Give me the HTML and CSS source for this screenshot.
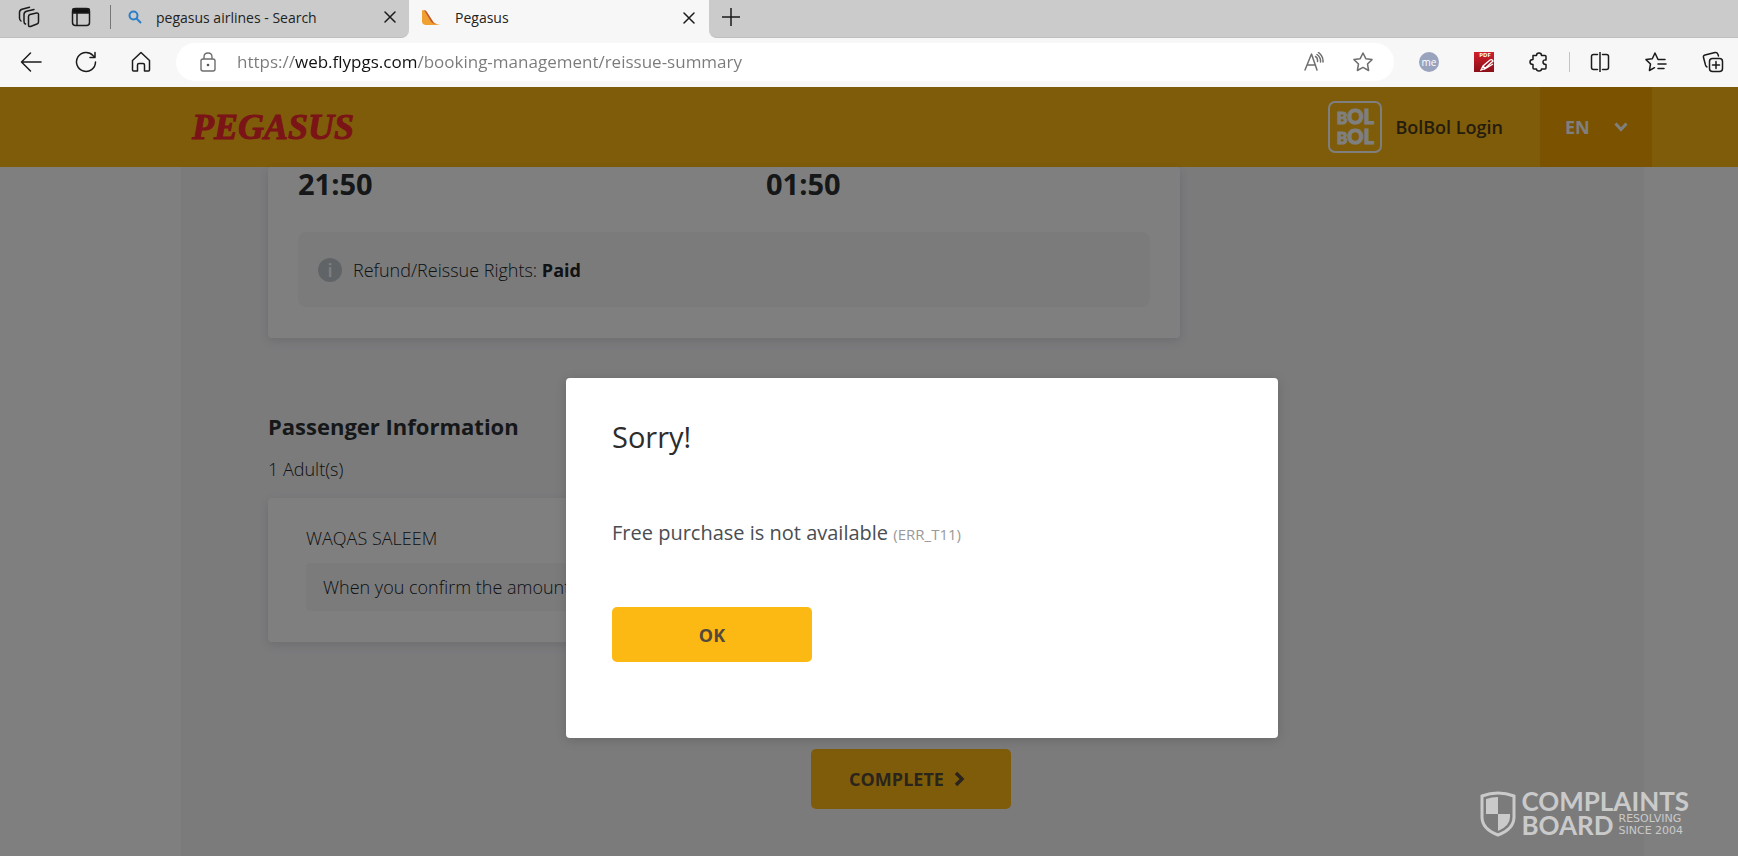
FILE: index.html
```html
<!DOCTYPE html>
<html lang="en">
<head>
  <meta charset="UTF-8" />
  <meta name="viewport" content="width=device-width, initial-scale=1.0"/>
  <title>Pegasus</title>
  <link rel="stylesheet" href="styles.css">
</head>
<body>
  <div class="tab-strip">
    <div class="strip-left">
      <button class="icon-btn workspaces" aria-label="Workspaces">
        <svg width="22" height="22" viewBox="0 0 22 22"><path d="M12 8.500 18.500 7q2-.3 2 1.500v7.500q0 1.500-1.500 2L12.500 20.500Q10.500 21 10.500 19v-8.500q0-1.500 1.500-2zM7.500 18Q6 17.500 6 15.500V8.500Q6 6 8.500 5.300L16 3.500M3 15Q1.500 14 1.500 12V6.500Q1.500 4 4 3.200L11.500 1.200"/></svg>
      </button>
      <button class="icon-btn tab-menu" aria-label="Tab actions">
        <svg width="20" height="20" viewBox="0 0 20 20"><rect x="1.500" y="1.500" width="17" height="17" rx="3"/><path d="M6 6v12"/><path class="solid" d="M2 2h16v4H2z"/></svg>
      </button>
      <div class="strip-line"></div>
      <div class="tab">
        <svg class="search-icon" width="14" height="14" viewBox="0 0 14 14"><circle cx="5.500" cy="5.500" r="4"/><path d="M8.500 8.500 13 13"/></svg>
        <span class="tab-title">pegasus airlines - Search</span>
        <button class="icon-btn" aria-label="Close tab">
          <svg width="12" height="12" viewBox="0 0 12 12"><path d="M1 1l10 10M11 1 1 11"/></svg>
        </button>
      </div>
    </div>
    <div class="tab tab-active">
      <svg class="favicon" width="20" height="16" viewBox="0 0 20 16"><path fill="#f0a030" d="M1 0Q4 0 5 2l6 8q2 4 8 5H4Q1 14 1 12z"/><path fill="#c0582c" d="M3 0q2 0 3 2l5 8q1 3 4 4-4 0-6-4z"/></svg>
      <span class="tab-title">Pegasus</span>
      <button class="icon-btn" aria-label="Close tab">
        <svg width="12" height="12" viewBox="0 0 12 12"><path d="M1 1l10 10M11 1 1 11"/></svg>
      </button>
    </div>
    <div class="strip-right">
      <button class="icon-btn" aria-label="New tab">
        <svg width="18" height="18" viewBox="0 0 18 18"><path d="M9 0v18M0 9h18"/></svg>
      </button>
    </div>
  </div>

  <div class="toolbar">
    <div class="nav-buttons">
      <button class="icon-btn" aria-label="Back">
        <svg width="22" height="22" viewBox="0 0 22 22"><path d="M21 11H2M10.500 2 1.500 11l9 9"/></svg>
      </button>
      <button class="icon-btn" aria-label="Refresh">
        <svg width="22" height="22" viewBox="0 0 22 22"><path d="M20.500 11A9.500 9.500 0 1 1 18 4.500L20 6.500M20 1.500v5h-5"/></svg>
      </button>
      <button class="icon-btn" aria-label="Home">
        <svg width="22" height="22" viewBox="0 0 22 22"><path d="M2.500 9.500 11 1.500l8.500 8V19q0 1-1 1H14.500v-6q0-1.500-1.500-1.500H9q-1.500 0-1.500 1.500v6H3.500q-1 0-1-1z"/></svg>
      </button>
    </div>
    <div class="address-bar">
      <svg class="lock" width="18" height="20" viewBox="0 0 18 20"><rect x="2" y="7" width="14" height="12" rx="2"/><path d="M5 7V5q0-4 4-4t4 4v2"/><circle class="dot" cx="9" cy="13" r="1.300"/></svg>
      <input class="url" type="text" aria-label="Address" value="https://web.flypgs.com/booking-management/reissue-summary">
      <button class="icon-btn grey" aria-label="Read aloud">
        <svg width="20" height="20" viewBox="0 0 20 20"><path d="M1 18 7.500 2 13 18M3 13h8.500M11.500 4.500Q14 6 13.500 9.500M13 2.500q4 3 3.500 7.500M14.500.5q5 4 4.500 9.500"/></svg>
      </button>
      <button class="icon-btn grey" aria-label="Add to favorites">
        <svg width="20" height="20" viewBox="0 0 20 20"><path d="m10 1 2.800 5.700 6.200.9-4.500 4.400 1.100 6.500L10 15.400 4.400 18.500l1.100-6.500L1 7.600l6.200-.9z"/></svg>
      </button>
    </div>
    <div class="extensions">
      <button class="ext-me" aria-label="me extension">me</button>
      <button class="ext-pdf" aria-label="PDF extension">
        <span>PDF</span>
        <svg width="14" height="12" viewBox="0 0 14 12"><path d="M1 11 3 7l7-6q2-1 3 1L5 9.500zM4 10.500 13 5M3 7l2 2.500"/></svg>
      </button>
      <button class="icon-btn" aria-label="Extensions">
        <svg width="20" height="20" viewBox="0 0 20 20"><path d="M4 3.500h3.500q0-2.500 2.500-2.500t2.500 2.500H16q1 0 1 1V8q-3-.5-3 2t3 2.500v3.500q0 1-1 1h-3.500q0 2-2.500 2t-2.500-2H5q-1 0-1-1V12.500Q1 12.500 1 10t3-2.500z"/></svg>
      </button>
      <div class="bar-line"></div>
      <button class="icon-btn" aria-label="Split screen">
        <svg width="20" height="20" viewBox="0 0 20 20"><path d="M7.500 2.500h-4q-2 0-2 2v11q0 2 2 2h4M12.500 2.500h4q2 0 2 2v11q0 2-2 2h-4M10 0v20"/></svg>
      </button>
      <button class="icon-btn" aria-label="Favorites">
        <svg width="22" height="20" viewBox="0 0 22 20"><path d="M20 7.500h-7L10 1 7.300 6.700 1 7.600 5.500 12 4.400 18.500 9.500 15.700M13 12h8M13 16.500h6"/></svg>
      </button>
      <button class="icon-btn" aria-label="Collections">
        <svg width="22" height="22" viewBox="0 0 22 22"><rect x="7.500" y="7.500" width="13" height="13" rx="3"/><path d="M14 10.500v7M10.500 14h7M16.500 5 15.800 3Q15 1 13 1.500L3 4Q1 4.500 1.500 6.500L3.500 14q.5 1.500 1.500 2"/></svg>
      </button>
    </div>
  </div>

  <div class="page">
    <header class="site-header">
      <a class="logo" href="#">PEGASUS</a>
      <div class="header-right">
        <a class="bolbol" href="#">
          <span class="bolbol-logo">
            <span class="bolbol-line"><small>B</small>OL</span>
            <span class="bolbol-line"><small>B</small>OL</span>
          </span>
          BolBol Login
        </a>
        <div class="lang">
          <select aria-label="Language">
            <option>EN</option>
          </select>
          <svg class="chevron" width="14" height="10" viewBox="0 0 14 10"><path d="M1.500 1.500 7 7.500l5.500-6"/></svg>
        </div>
      </div>
    </header>

    <main class="content">
      <section class="card flight-card">
        <div class="times">
          <span>21:50</span>
          <span>01:50</span>
        </div>
        <div class="rights">
          <span class="info-icon">i</span>
          <p>Refund/Reissue Rights: <b>Paid</b></p>
        </div>
      </section>

      <h2>Passenger Information</h2>
      <p class="pax-count">1 Adult(s)</p>

      <section class="card pax-card">
        <p>WAQAS SALEEM</p>
        <p class="pax-note">When you confirm the amount</p>
      </section>

      <button class="btn complete">
        COMPLETE
        <svg width="11" height="16" viewBox="0 0 11 16"><path d="M2 2l6 6-6 6"/></svg>
      </button>
    </main>

    <div class="overlay">
      <div class="modal" role="dialog" aria-labelledby="modalTitle">
        <h1 id="modalTitle">Sorry!</h1>
        <p class="modal-text">Free purchase is not available <span class="code">(ERR_T11)</span></p>
        <button class="btn ok">OK</button>
      </div>
    </div>

    <div class="watermark">
      <svg width="36" height="46" viewBox="0 0 36 46"><path class="shield" d="M2 5Q10 2 18 2t16 3v21q0 12-16 18Q2 38 2 26z"/><path d="M6 8q6-2 12-2v17H6zM18 23h12v3q0 9-12 14z"/></svg>
      <div class="wm-text">
        <div class="wm-big">COMPLAINTS</div>
        <div class="wm-row">
          <span class="wm-big">BOARD</span>
          <span class="wm-small">RESOLVING<br>SINCE 2004</span>
        </div>
      </div>
    </div>
  </div>
</body>
</html>
```

FILE: styles.css
```css
* {
  box-sizing: border-box;
}

body, html {
  margin: 0;
  padding: 0;
  height: 100%;
  font-family: "Open Sans", "Noto Sans", sans-serif;
  overflow: hidden;
}

body {
  display: flex;
  flex-direction: column;
}

h1, h2, p {
  margin: 0;
}

button {
  border: none;
  background: none;
  padding: 0;
  font-family: inherit;
  cursor: pointer;
}

svg {
  display: block;
  flex: none;
}

/* Browser tabs */
.tab-strip {
  display: flex;
  height: 38px;
  background: #f7f7f7;
  flex: none;
}

.strip-left,
.strip-right {
  display: flex;
  align-items: center;
  background: #cbcbcb;
  border-bottom: 1px solid #bebebe;
  padding-bottom: 3px;
}

.strip-left {
  width: 409px;
  border-bottom-right-radius: 8px;
  padding-left: 18px;
}

.strip-right {
  flex: 1;
  border-bottom-left-radius: 8px;
  padding-left: 13px;
}

.icon-btn svg {
  fill: none;
  stroke: #1b1b1b;
  stroke-width: 1.5;
  stroke-linejoin: round;
  stroke-linecap: round;
}

.icon-btn svg .solid {
  fill: #111;
}

.icon-btn.grey svg {
  stroke: #6e6e6e;
}

.tab-menu {
  margin-left: 31px;
}

.strip-line {
  width: 1px;
  height: 24px;
  margin-left: 19px;
  background: #777;
}

.tab {
  display: flex;
  flex: 1;
  align-items: center;
  gap: 14px;
  padding: 0 13px 0 17px;
}

.tab-active {
  flex: none;
  width: 300px;
  padding: 0 14px 3px 12px;
}

.tab-title {
  flex: 1;
  font-size: 14px;
  color: #222;
}

.search-icon {
  fill: none;
  stroke: #2a7fc9;
  stroke-width: 2;
}

/* Browser toolbar */
.toolbar {
  display: flex;
  align-items: center;
  height: 49px;
  padding: 0 14px 2px 20px;
  background: #f7f7f7;
  flex: none;
}

.nav-buttons {
  display: flex;
  gap: 33px;
}

.address-bar {
  display: flex;
  flex: 1;
  align-items: center;
  height: 38px;
  margin-left: 24px;
  padding: 0 21px 0 23px;
  background: #fff;
  border-radius: 19px;
}

.address-bar .grey {
  margin-left: 29px;
}

.lock {
  fill: none;
  stroke: #6e6e6e;
  stroke-width: 1.4;
}

.lock .dot {
  fill: #555;
  stroke: none;
}

.url {
  flex: 1;
  min-width: 0;
  margin-left: 20px;
  padding: 0;
  border: none;
  outline: none;
  font-family: inherit;
  font-size: 17px;
  color: transparent;
  /* host name is darker than the rest of the address */
  background: linear-gradient(90deg, #7a7a7a 57px, #111 57px, #111 180px, #7a7a7a 180px);
  -webkit-background-clip: text;
  background-clip: text;
}

.extensions {
  display: flex;
  align-items: center;
  gap: 35px;
  margin-left: 25px;
}

.ext-me {
  width: 20px;
  height: 20px;
  border-radius: 50%;
  background: #9aa3bd;
  color: #fff;
  font-size: 10px;
  line-height: 18px;
}

.ext-pdf {
  display: flex;
  flex-direction: column;
  width: 20px;
  height: 20px;
  background: linear-gradient(#d0202c, #8c0f18);
  color: #fff;
}

.ext-pdf span {
  margin-left: 2px;
  font-size: 6px;
  font-weight: 700;
  line-height: 7px;
}

.ext-pdf svg {
  align-self: flex-end;
  fill: none;
  stroke: #fff;
  stroke-width: 1.3;
}

.bar-line {
  width: 1px;
  height: 20px;
  margin: 0 -15px;
  background: #c4c4c4;
}

/* Site */
.page {
  position: relative;
  display: flex;
  flex-direction: column;
  flex: 1;
  min-height: 0;
  overflow: hidden;
  background: #fff;
  color: #202428;
}

.site-header {
  display: flex;
  align-items: center;
  justify-content: space-between;
  flex: none;
  height: 80px;
  padding: 0 86px 0 192px;
  background: #fdb913;
}

.logo {
  font-family: "Liberation Serif", serif;
  font-size: 36px;
  font-weight: 700;
  font-style: italic;
  color: #f5282e;
  -webkit-text-stroke: 1px #f5282e;
  text-decoration: none;
}

.header-right,
.bolbol {
  display: flex;
  align-items: center;
}

.header-right {
  height: 100%;
}

.bolbol {
  gap: 13px;
  margin-right: 37px;
  color: #4a3a1c;
  font-size: 18px;
  font-weight: 600;
  text-decoration: none;
}

.bolbol-logo {
  display: flex;
  flex-direction: column;
  align-items: center;
  justify-content: center;
  width: 54px;
  height: 52px;
  border: 2px solid #fff;
  border-radius: 7px;
  color: #fff;
  font-family: Lato, sans-serif;
  font-weight: 900;
  -webkit-text-stroke: 1px #fff;
}

.bolbol-line {
  font-size: 20px;
  line-height: 18px;
}

.bolbol-line small {
  font-size: 16px;
}

.lang {
  display: grid;
  align-items: center;
  width: 112px;
  height: 100%;
  background: #f6a400;
}

.lang select,
.lang .chevron {
  grid-area: 1 / 1;
}

.lang select {
  appearance: none;
  width: 100%;
  height: 100%;
  padding: 0 25px;
  border: none;
  background: none;
  color: #fff;
  font-family: inherit;
  font-size: 18px;
  font-weight: 700;
}

.chevron {
  justify-self: end;
  margin-right: 24px;
  fill: none;
  stroke: #fff;
  stroke-width: 3;
  pointer-events: none;
}

.content {
  display: flex;
  flex-direction: column;
  flex: 1;
  margin: 0 94px 0 181px;
  padding: 0 90px 0 87px;
  background: #f6f6f9;
}

.card {
  width: 100%;
  max-width: 912px;
  background: #fff;
  border-radius: 4px;
  box-shadow: 0 3px 10px rgba(60, 70, 80, 0.15);
}

.flight-card {
  padding: 0 30px 31px;
}

.times {
  display: grid;
  grid-template-columns: 468px 1fr;
  font-size: 29px;
  font-weight: 700;
  line-height: 34px;
  color: #2b2f33;
}

.rights {
  display: flex;
  align-items: center;
  gap: 11px;
  height: 75px;
  margin-top: 31px;
  padding: 0 20px;
  background: #f6f6f9;
  border-radius: 8px;
  font-size: 18px;
  font-weight: 300;
}

.rights b {
  font-weight: 700;
}

.info-icon {
  width: 24px;
  height: 24px;
  border-radius: 50%;
  background: #c3c9cf;
  color: #fff;
  font-weight: 600;
  line-height: 24px;
  text-align: center;
}

.content h2 {
  margin-top: 72px;
  font-size: 22px;
  line-height: 32px;
  color: #2b2f33;
}

.pax-count {
  margin-top: 13px;
  font-size: 18px;
  font-weight: 300;
  line-height: 28px;
}

.pax-card {
  margin-top: 15px;
  padding: 26px 38px 31px;
  font-size: 18px;
  font-weight: 300;
  line-height: 28px;
}

.pax-note {
  margin-top: 11px;
  padding: 10px 17px;
  background: #f6f6f9;
  border-radius: 4px;
}

.btn {
  display: flex;
  align-items: center;
  justify-content: center;
  gap: 10px;
  width: 200px;
  background: #fdb913;
  border-radius: 5px;
  color: #54493a;
  font-size: 18px;
  font-weight: 700;
}

.complete {
  align-self: center;
  height: 60px;
  margin-top: 107px;
  padding-right: 8px;
}

.complete svg {
  fill: none;
  stroke: #54493a;
  stroke-width: 3.5;
}

/* Dimmed layer with the error dialog */
.overlay {
  position: absolute;
  inset: 0;
  display: flex;
  justify-content: center;
  align-items: flex-start;
  padding: 291px 0 0 106px;
  background: rgba(0, 0, 0, 0.5);
}

.modal {
  width: 712px;
  padding: 39px 46px 76px;
  background: #fff;
  border-radius: 4px;
  box-shadow: 0 2px 12px rgba(0, 0, 0, 0.15);
}

.modal h1 {
  font-size: 29px;
  font-weight: 400;
  line-height: 40px;
  color: #2c2c2c;
}

.modal-text {
  margin-top: 60px;
  font-size: 20px;
  line-height: 32px;
  color: #4a4d52;
}

.code {
  font-size: 15px;
  color: #999;
}

.ok {
  height: 55px;
  margin-top: 57px;
}

.watermark {
  position: absolute;
  right: 49px;
  bottom: 19px;
  display: flex;
  align-items: center;
  gap: 5px;
  color: #cacaca;
}

.watermark svg {
  fill: #cacaca;
}

.watermark .shield {
  fill: none;
  stroke: #cacaca;
  stroke-width: 3;
}

.wm-big {
  font-family: Lato, sans-serif;
  font-size: 26px;
  font-weight: 700;
  line-height: 23px;
}

.wm-row {
  display: flex;
  align-items: center;
  gap: 5px;
}

.wm-small {
  font-family: "DejaVu Sans", sans-serif;
  font-size: 11px;
  line-height: 12px;
}
```
